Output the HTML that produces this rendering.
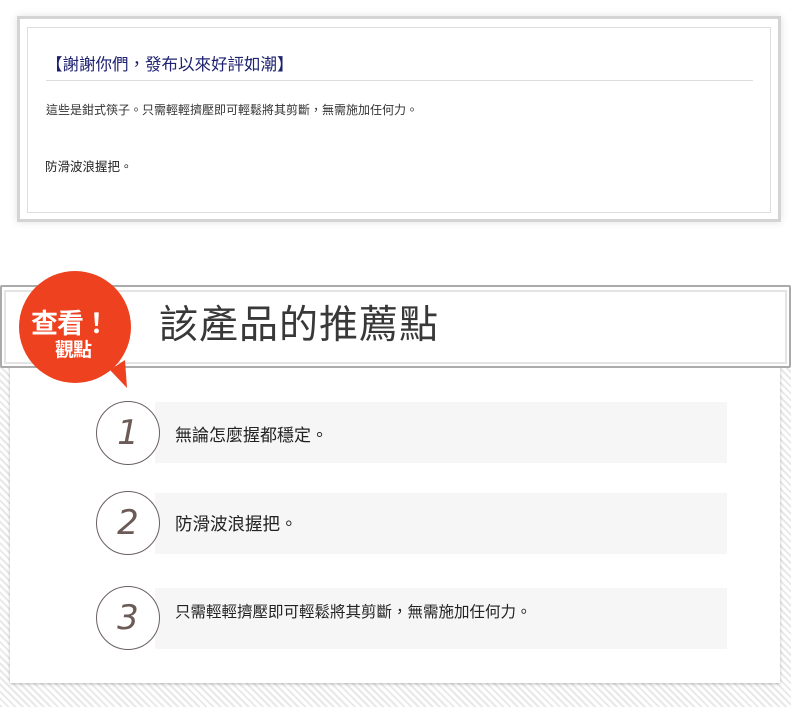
<!DOCTYPE html>
<html><head><meta charset="utf-8"><style>
body{margin:0;width:801px;height:716px;background:#fff;position:relative;overflow:hidden;font-family:"Liberation Sans","Noto Sans CJK TC",sans-serif;}
.abs{position:absolute}
.card{left:17px;top:16px;width:758px;height:200px;border:3px solid #d4d4d4;box-shadow:0 0 8px rgba(0,0,0,.12);background:#fff}
.inner{left:27px;top:27px;width:742px;height:184px;border:1px solid #ddd}
.h{left:46px;top:51px;font-size:16.5px;color:#1e2270;}
.line{left:46px;top:80px;width:707px;height:1px;background:#ddd}
.t1{left:46px;top:101px;font-size:12px;color:#333}
.t2{left:45px;top:156px;font-size:12.5px;color:#222}
.stripes{left:0;top:367px;width:791px;height:340px;background:repeating-linear-gradient(45deg,#e8e8e8 0 2px,#fff 2px 5px)}
.panel{left:10px;top:367px;width:770px;height:316px;background:#fff;box-shadow:0 1px 3px rgba(0,0,0,.25)}
.bar{left:0;top:285px;width:787px;height:79px;border:2px solid #aaa;border-radius:2px;background:#fff}
.bari{left:4px;top:290px;width:779px;height:70px;border:2px solid #e4e4e4}
.title{left:159px;top:294px;font-size:39px;color:#383838;letter-spacing:1px}
.row{left:155px;width:572px;height:61px;background:#f6f6f6}
.circ{width:62px;height:62px;border:1.5px solid #6b6060;border-radius:50%;background:#fff;text-align:center;line-height:62px;font-size:34px;font-style:italic;color:#6b5a55;font-family:"DejaVu Sans","Liberation Sans",sans-serif;font-weight:300}
.rt{left:175px;font-size:17px;color:#222}
</style></head><body>
<div class="abs card"></div>
<div class="abs inner"></div>
<div class="abs h">【謝謝你們，發布以來好評如潮】</div>
<div class="abs line"></div>
<div class="abs t1">這些是鉗式筷子。只需輕輕擠壓即可輕鬆將其剪斷，無需施加任何力。</div>
<div class="abs t2">防滑波浪握把。</div>

<div class="abs stripes"></div>
<div class="abs panel"></div>
<div class="abs bar"></div>
<div class="abs bari"></div>
<div class="abs title">該產品的推薦點</div>

<svg class="abs" style="left:15px;top:265px" width="130" height="130">
<circle cx="60" cy="62" r="56" fill="#ee4120"/>
<path d="M95 105 L112 123 L110 95 Z" fill="#ee4120"/>
</svg>
<div class="abs" style="left:31px;top:302px;font-size:27px;font-weight:bold;color:#fff;letter-spacing:-1px">查看！</div>
<div class="abs" style="left:55px;top:335px;font-size:19px;font-weight:bold;color:#fff;letter-spacing:-1px">觀點</div>

<div class="abs row" style="top:402px"></div>
<div class="abs row" style="top:493px"></div>
<div class="abs row" style="top:588px"></div>
<div class="abs circ" style="left:96px;top:401px">1</div>
<div class="abs circ" style="left:96px;top:491px">2</div>
<div class="abs circ" style="left:96px;top:586px">3</div>
<div class="abs rt" style="top:421px">無論怎麼握都穩定。</div>
<div class="abs rt" style="top:511px;font-size:17.5px">防滑波浪握把。</div>
<div class="abs rt" style="top:600px;font-size:15.5px">只需輕輕擠壓即可輕鬆將其剪斷，無需施加任何力。</div>
</body></html>
